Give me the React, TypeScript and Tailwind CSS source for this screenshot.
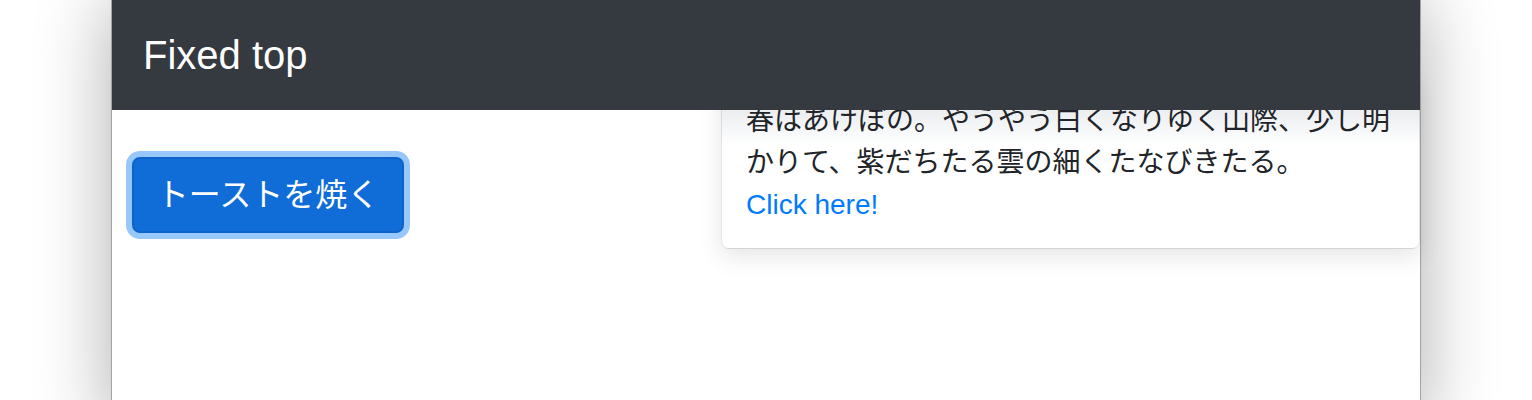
import React from "react";

export default function App() {
  return (
    <div className="w-[1532px] h-[400px] bg-white overflow-hidden">
      <div className="relative ml-[111px] w-[1310px] h-[430px] bg-white border-x border-[#a3a3a3] shadow-[0_0_70px_rgba(0,0,0,0.32)]">
        <nav className="relative z-10 h-[110px] bg-[#343a40] flex items-center pl-[31px] pb-[1px]">
          <span className="text-white text-[40px] leading-[60px] font-['Liberation_Sans',sans-serif]">
            Fixed top
          </span>
        </nav>

        <div className="pl-[20px] pt-[47px]">
          <button className="h-[76px] w-[272px] rounded-[8px] bg-[#106dd8] border-2 border-[#0d63c9] text-white text-[32px] leading-[40px] font-['Liberation_Sans','Noto_Sans_CJK_JP',sans-serif] shadow-[0_0_0_6px_#98c8fb] flex items-center justify-center">
            トーストを焼く
          </button>
        </div>

        <div className="absolute z-0 top-[75px] right-0 w-[699px] rounded-[8px] border border-black/10 bg-[linear-gradient(to_bottom,#eceef0_35px,#ffffff_70px)] shadow-[0_8px_24px_rgba(0,0,0,0.1)] px-[24px] pt-[24px] pb-[22px] text-[28px] leading-[42px] text-[#212529] font-['Liberation_Sans','Noto_Sans_CJK_JP',sans-serif]">
          <p>春はあけぼの。やうやう白くなりゆく山際、少し明かりて、紫だちたる雲の細くたなびきたる。</p>
          <a className="text-[#007bff]" href="#">
            Click here!
          </a>
        </div>
      </div>
    </div>
  );
}
